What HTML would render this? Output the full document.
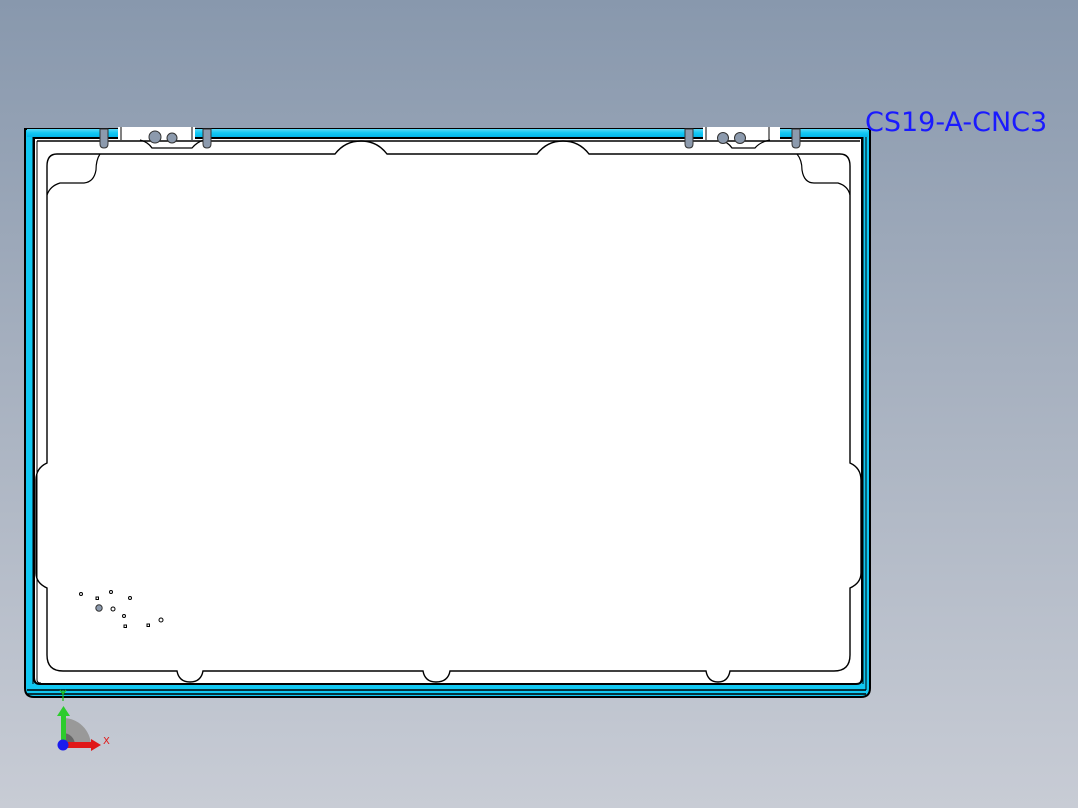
<!DOCTYPE html>
<html><head><meta charset="utf-8"><style>
html,body{margin:0;padding:0;width:1078px;height:808px;overflow:hidden}
body{background:linear-gradient(to bottom,#8898ad 0%,#a6b0bf 45%,#c8ccd5 100%)}
svg{position:absolute;left:0;top:0}
.t{font-family:"DejaVu Sans","Liberation Sans",sans-serif;font-size:27px;fill:#1a1aff;font-weight:normal}
</style></head><body>
<svg width="1078" height="808" viewBox="0 0 1078 808">
<defs>
<linearGradient id="cy" x1="0" y1="0" x2="0" y2="1"><stop offset="0" stop-color="#5ad8f8"/><stop offset="0.5" stop-color="#11c8f4"/><stop offset="1" stop-color="#05b6ea"/></linearGradient>
</defs>
<!-- outer frame cyan -->
<path d="M25,129 H870 V688 Q870,697 861,697 H34 Q25,697 25,688 Z" fill="#11c8f2" stroke="#000" stroke-width="2"/>
<rect x="27" y="129" width="841" height="8" fill="url(#cy)"/>
<path d="M27,690 H866 M27,694 H866" stroke="#000" stroke-width="1.5"/>
<path d="M33,137 V684 M863,137 V684 M866,137 V690" stroke="#000" stroke-width="1"/>
<!-- white inner -->
<path d="M34,138 H862 V678 Q862,684 856,684 H40 Q34,684 34,678 Z" fill="#fff" stroke="#000" stroke-width="2"/>
<path d="M37,141 H860" stroke="#000" stroke-width="1.5"/>
<path d="M37,141 V680 Q37,683 41,683" fill="none" stroke="#000" stroke-width="1"/>
<!-- main tray shape -->
<path d="M57,154 H335 Q345,141 361,141 Q377,141 387,154 H537 Q547,141 563,141 Q579,141 589,154 H840 Q850,154 850,166 V463 Q861,468 861,480 V573 Q861,583 850,588 V655 Q850,671 834,671 H730 Q728,682 718,682 Q708,682 706,671 H450 Q448,682 436,682 Q425,682 423,671 H203 Q201,682 190,682 Q179,682 177,671 H63 Q47,671 47,655 V588 Q36,583 36,573 V480 Q36,468 47,463 V166 Q47,154 57,154 Z" fill="none" stroke="#000" stroke-width="1.4"/>
<!-- inner tab lines -->
<path d="M100,154 Q96,160 96,170 Q94,182 84,183 H60 Q50,186 47,195" fill="none" stroke="#000" stroke-width="1.2"/>
<path d="M797,154 Q802,160 802,170 Q804,183 814,183 H838 Q848,186 850,195" fill="none" stroke="#000" stroke-width="1.2"/>
<!-- hinges left -->
<path d="M118,127 H195 V140 H118 Z" fill="#fff"/>
<path d="M121,127 V140 M192,127 V140" stroke="#000" stroke-width="1"/>
<path d="M140,140 Q148,142 152,148 H192 Q197,142 204,140" fill="none" stroke="#000" stroke-width="1.2"/>
<circle cx="155" cy="137" r="6" fill="#8c9aad" stroke="#333" stroke-width="1"/>
<circle cx="172" cy="138" r="5" fill="#8c9aad" stroke="#333" stroke-width="1"/>
<path d="M100,129 H108 V144 Q108,148 104,148 Q100,148 100,144 Z M203,129 H211 V144 Q211,148 207,148 Q203,148 203,144 Z" fill="#8c9aad" stroke="#333" stroke-width="1"/>
<!-- hinges right -->
<path d="M703,127 H780 V140 H703 Z" fill="#fff"/>
<path d="M706,127 V140 M769,127 V140" stroke="#000" stroke-width="1"/>
<path d="M720,140 Q728,142 732,148 H755 Q760,142 770,140" fill="none" stroke="#000" stroke-width="1.2"/>
<circle cx="723" cy="138" r="5.5" fill="#8c9aad" stroke="#333" stroke-width="1"/>
<circle cx="740" cy="138" r="5.5" fill="#8c9aad" stroke="#333" stroke-width="1"/>
<path d="M685,129 H693 V144 Q693,148 689,148 Q685,148 685,144 Z M792,129 H800 V144 Q800,148 796,148 Q792,148 792,144 Z" fill="#8c9aad" stroke="#333" stroke-width="1"/>
<!-- holes -->
<g fill="none" stroke="#000" stroke-width="1">
<circle cx="81" cy="594" r="1.5"/><rect x="96" y="597" width="2.5" height="2.5"/><circle cx="111" cy="592" r="1.5"/>
<circle cx="130" cy="598" r="1.5"/><circle cx="113" cy="609" r="2"/><circle cx="124" cy="616" r="1.5"/>
<rect x="124" y="625" width="2.5" height="2.5"/><rect x="147" y="624" width="2.5" height="2.5"/><circle cx="161" cy="620" r="2"/>
</g>
<circle cx="99" cy="608" r="3.2" fill="#8c9aad" stroke="#333" stroke-width="1"/>
<!-- axis triad -->
<path d="M63,745 L63,718 A28,28 0 0 1 91,745 Z" fill="#999"/>
<path d="M63,745 L63,733 A12,12 0 0 1 75,745 Z" fill="#666"/>
<rect x="61" y="714" width="5" height="29" fill="#2ccc2c"/>
<path d="M57,716 L63.5,706 L70,716 Z" fill="#2ccc2c"/>
<path d="M63,690 L63,701 M60,690 L63,694 L66,690" stroke="#1ebd1e" stroke-width="1.2" fill="none"/>
<rect x="66" y="742" width="26" height="6" fill="#e01818"/>
<path d="M91,739 L101,745 L91,751 Z" fill="#e01818"/>
<text x="103" y="744" font-family="DejaVu Sans,sans-serif" font-size="10" fill="#e01818">X</text>
<circle cx="63" cy="745" r="5.5" fill="#1a1aee"/>
<!-- title -->
<text x="865" y="131" class="t">CS19-A-CNC3</text>
</svg>
</body></html>
